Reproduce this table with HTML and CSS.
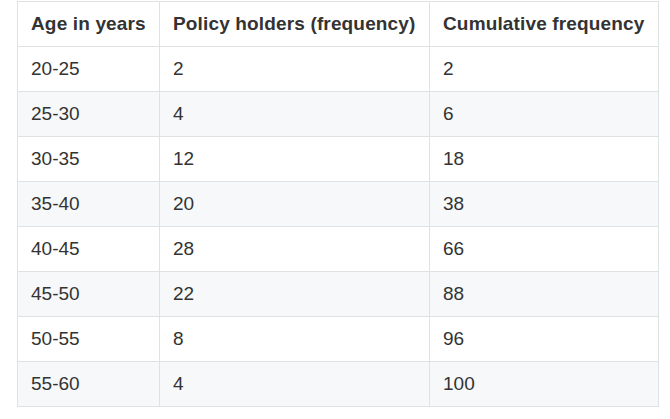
FILE: index.html
```html
<!DOCTYPE html>
<html>
<head>
<meta charset="utf-8">
<link rel="stylesheet" href="styles.css">
</head>
<body>
<table class="data">
  <colgroup><col class="c1"><col class="c2"><col class="c3"></colgroup>
  <thead>
    <tr><th>Age in years</th><th>Policy holders (frequency)</th><th>Cumulative frequency</th></tr>
  </thead>
  <tbody>
    <tr><td>20-25</td><td>2</td><td>2</td></tr>
    <tr><td>25-30</td><td>4</td><td>6</td></tr>
    <tr><td>30-35</td><td>12</td><td>18</td></tr>
    <tr><td>35-40</td><td>20</td><td>38</td></tr>
    <tr><td>40-45</td><td>28</td><td>66</td></tr>
    <tr><td>45-50</td><td>22</td><td>88</td></tr>
    <tr><td>50-55</td><td>8</td><td>96</td></tr>
    <tr><td>55-60</td><td>4</td><td>100</td></tr>
  </tbody>
</table>
</body>
</html>
```
FILE: styles.css
```css
html, body {
  margin: 0;
  padding: 0;
  background: #fff;
}
body {
  padding: 1px 0 0 17px;
  font-family: "Liberation Sans", Arial, sans-serif;
  font-size: 19px;
  color: #333;
}
.data {
  border-collapse: collapse;
  border-spacing: 0;
  table-layout: fixed;
  width: 641px;
}
.c1 { width: 142px; }
.c2 { width: 270px; }
.c3 { width: 229px; }
.data th, .data td {
  border: 1px solid #dfe2e5;
  padding: 0 13px;
  height: 45px;
  box-sizing: border-box;
  line-height: 24px;
  text-align: left;
  vertical-align: middle;
  white-space: nowrap;
}
.data th {
  font-weight: bold;
  letter-spacing: 0.15px;
}
.data tbody tr:nth-child(even) {
  background: #f6f8fa;
}
```
